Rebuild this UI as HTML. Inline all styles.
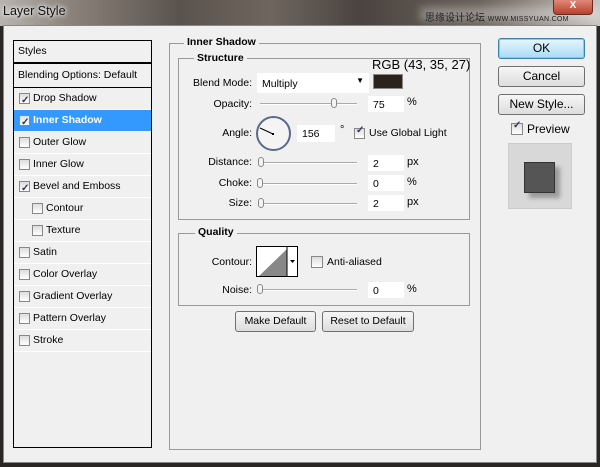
<!DOCTYPE html>
<html><head><style>
*{margin:0;padding:0;box-sizing:border-box}
body{width:600px;height:467px;overflow:hidden;background:#2a2624;font-family:"Liberation Sans",sans-serif;font-size:11px;color:#000;position:relative}
.a{position:absolute}
.title{left:0;top:0;width:600px;height:26px;background:linear-gradient(90deg,#b8b4b0,#8a827a 12%,#5a524c 30%,#6e665e 45%,#4a4440 60%,#6a625a 80%,#c8c4c0);}
.dlg{left:3px;top:25px;width:594px;height:438px;background:#f0f0f0;border:1px solid #888}
.list{left:13px;top:40px;width:139px;height:408px;border:1px solid #000;background:#f0f0f0}
.row{position:absolute;left:0;width:137px;height:22px;border-bottom:1px solid #fff;line-height:21px;font-size:10.5px}
.cb{position:absolute;width:11px;height:11px;border:1px solid #888;background:linear-gradient(#ddd,#fff);top:5px}
.ck::after{content:"✓";position:absolute;left:1px;top:-4px;font-size:10px;color:#335;font-weight:bold}
.grp{border:1px solid #999}
.lbl{position:absolute;background:#f0f0f0;font-weight:bold;padding:0 3px;font-size:10.5px}
.t{position:absolute;font-size:10.5px;text-align:right}
.in{position:absolute;background:#fff;height:16px;font-size:10.5px;padding:3px 0 0 5px}
.sl{position:absolute;height:2px;border-top:1px solid #aaa;border-bottom:1px solid #fff}
.th{position:absolute;width:6px;height:10px;border:1px solid #888;border-radius:3px;background:#f4f4f4}
.btn{position:absolute;border:1px solid #707070;border-radius:3px;background:linear-gradient(#f6f6f6,#dddddd);text-align:center;font-size:12px}
</style></head><body>
<div class="a title"></div>
<div class="a" style="left:3px;top:4px;color:#111;font-size:12.5px;text-shadow:0 0 4px #fff,0 0 6px #fff">Layer Style</div>
<div class="a" style="left:420px;top:7px;width:180px;height:14px;background:rgba(255,255,255,0.3);filter:blur(4px)"></div>
<div class="a" style="left:425px;top:9px;color:#222;font-size:10px;font-family:'Liberation Sans','Noto Sans CJK SC',sans-serif">思缘设计论坛 <span style="font-size:7px;letter-spacing:.3px">WWW.MISSYUAN.COM</span></div>
<div class="a" style="left:553px;top:0;width:40px;height:15px;background:linear-gradient(#e08878,#b8402f);border:1px solid #6a2a20;border-top:0;border-radius:0 0 4px 4px;color:#fff;text-align:center;font-size:10px;font-weight:bold">X</div>
<div class="a dlg"></div>
<div class="a list">
 <div class="row" style="top:0;height:23px;padding-left:4px;border-bottom:2px solid #000">Styles</div>
 <div class="row" style="top:23px;height:24px;padding-left:4px;line-height:23px;border-bottom:1px solid #000">Blending Options: Default</div>
 <div class="row" style="top:47px"><span class="cb ck" style="left:5px"></span><span style="position:absolute;left:19px">Drop Shadow</span></div>
 <div class="row" style="top:69px;background:#3399ff;color:#fff;font-weight:bold"><span class="cb ck" style="left:5px"></span><span style="position:absolute;left:19px">Inner Shadow</span></div>
 <div class="row" style="top:91px"><span class="cb" style="left:5px"></span><span style="position:absolute;left:19px">Outer Glow</span></div>
 <div class="row" style="top:113px"><span class="cb" style="left:5px"></span><span style="position:absolute;left:19px">Inner Glow</span></div>
 <div class="row" style="top:135px"><span class="cb ck" style="left:5px"></span><span style="position:absolute;left:19px">Bevel and Emboss</span></div>
 <div class="row" style="top:157px"><span class="cb" style="left:18px"></span><span style="position:absolute;left:32px">Contour</span></div>
 <div class="row" style="top:179px"><span class="cb" style="left:18px"></span><span style="position:absolute;left:32px">Texture</span></div>
 <div class="row" style="top:201px"><span class="cb" style="left:5px"></span><span style="position:absolute;left:19px">Satin</span></div>
 <div class="row" style="top:223px"><span class="cb" style="left:5px"></span><span style="position:absolute;left:19px">Color Overlay</span></div>
 <div class="row" style="top:245px"><span class="cb" style="left:5px"></span><span style="position:absolute;left:19px">Gradient Overlay</span></div>
 <div class="row" style="top:267px"><span class="cb" style="left:5px"></span><span style="position:absolute;left:19px">Pattern Overlay</span></div>
 <div class="row" style="top:289px"><span class="cb" style="left:5px"></span><span style="position:absolute;left:19px">Stroke</span></div>
</div>
<div class="a grp" style="left:169px;top:43px;width:312px;height:407px"></div>
<div class="lbl" style="left:184px;top:36px">Inner Shadow</div>
<div class="a grp" style="left:178px;top:58px;width:292px;height:162px"></div>
<div class="lbl" style="left:194px;top:52px">Structure</div>
<div class="a" style="left:372px;top:57px;font-size:13px">RGB (43, 35, 27)</div>
<div class="t" style="left:180px;width:72px;top:77px">Blend Mode:</div>
<div class="in" style="left:257px;top:73px;width:112px;height:20px;padding-top:5px">Multiply<span style="position:absolute;right:5px;top:3px;font-size:8px">▼</span></div>
<div class="a" style="left:373px;top:74px;width:30px;height:15px;background:#2b231b;border:1px solid #888"></div>
<div class="t" style="left:180px;width:72px;top:98px">Opacity:</div>
<div class="sl" style="left:260px;top:103px;width:97px"></div><div class="th" style="left:331px;top:98px"></div>
<div class="in" style="left:368px;top:96px;width:36px">75</div><div class="a" style="left:407px;top:96px">%</div>
<div class="t" style="left:180px;width:72px;top:127px">Angle:</div>
<div class="a" style="left:256px;top:116px;width:35px;height:35px;border-radius:50%;border:2px solid #5a6a8a;background:#f4f4f4"></div>
<svg class="a" style="left:256px;top:116px" width="35" height="35"><line x1="4" y1="12" x2="17" y2="18" stroke="#000" stroke-width="1"/><rect x="16" y="17" width="2" height="2"/></svg>
<div class="in" style="left:297px;top:125px;width:38px;height:17px">156</div>
<div class="a" style="left:340px;top:124px">°</div>
<span class="cb ck a" style="left:354px;top:128px;position:absolute"></span>
<div class="a" style="left:369px;top:127px;font-size:10.5px">Use Global Light</div>
<div class="t" style="left:180px;width:72px;top:156px">Distance:</div>
<div class="sl" style="left:260px;top:162px;width:97px"></div><div class="th" style="left:258px;top:157px"></div>
<div class="in" style="left:368px;top:155px;width:36px">2</div><div class="a" style="left:407px;top:156px">px</div>
<div class="t" style="left:180px;width:72px;top:177px">Choke:</div>
<div class="sl" style="left:260px;top:183px;width:97px"></div><div class="th" style="left:257px;top:178px"></div>
<div class="in" style="left:368px;top:175px;width:36px">0</div><div class="a" style="left:407px;top:176px">%</div>
<div class="t" style="left:180px;width:72px;top:197px">Size:</div>
<div class="sl" style="left:260px;top:203px;width:97px"></div><div class="th" style="left:258px;top:198px"></div>
<div class="in" style="left:368px;top:195px;width:36px">2</div><div class="a" style="left:407px;top:196px">px</div>
<div class="a grp" style="left:178px;top:233px;width:292px;height:73px"></div>
<div class="lbl" style="left:195px;top:226px">Quality</div>
<div class="t" style="left:180px;width:72px;top:256px">Contour:</div>
<div class="a" style="left:256px;top:246px;width:42px;height:31px;border:1px solid #000;background:#fff"></div>
<svg class="a" style="left:257px;top:247px" width="40" height="29"><polygon points="2,29 30,2 30,29" fill="#888"/><line x1="30" y1="0" x2="30" y2="29" stroke="#000"/><polygon points="33,13 38,13 35.5,16" fill="#000"/></svg>
<span class="cb a" style="left:311px;top:256px;position:absolute;width:12px;height:12px"></span>
<div class="a" style="left:327px;top:256px;font-size:10.5px">Anti-aliased</div>
<div class="t" style="left:180px;width:72px;top:284px">Noise:</div>
<div class="sl" style="left:260px;top:289px;width:97px"></div><div class="th" style="left:257px;top:284px"></div>
<div class="in" style="left:368px;top:282px;width:36px">0</div><div class="a" style="left:407px;top:283px">%</div>
<div class="btn" style="left:235px;top:311px;width:81px;height:21px;font-size:10.5px;line-height:19px">Make Default</div>
<div class="btn" style="left:322px;top:311px;width:92px;height:21px;font-size:10.5px;line-height:19px">Reset to Default</div>
<div class="btn" style="left:498px;top:38px;width:87px;height:21px;line-height:19px;border-color:#3c7fb1;background:linear-gradient(#e8f6fd,#a8dcf4);box-shadow:0 0 0 1px #7fd0f0 inset">OK</div>
<div class="btn" style="left:498px;top:66px;width:87px;height:21px;line-height:19px">Cancel</div>
<div class="btn" style="left:498px;top:94px;width:87px;height:21px;line-height:19px">New Style...</div>
<span class="cb ck a" style="left:511px;top:123px;position:absolute;width:12px;height:12px"></span>
<div class="a" style="left:527px;top:122px;font-size:12px">Preview</div>
<div class="a" style="left:508px;top:143px;width:64px;height:66px;background:#d8d8d8;border:1px solid #ccc"></div>
<div class="a" style="left:529px;top:167px;width:31px;height:31px;background:#999;filter:blur(2px)"></div>
<div class="a" style="left:524px;top:162px;width:31px;height:31px;background:#555;border:1px solid #333"></div>
</body></html>
